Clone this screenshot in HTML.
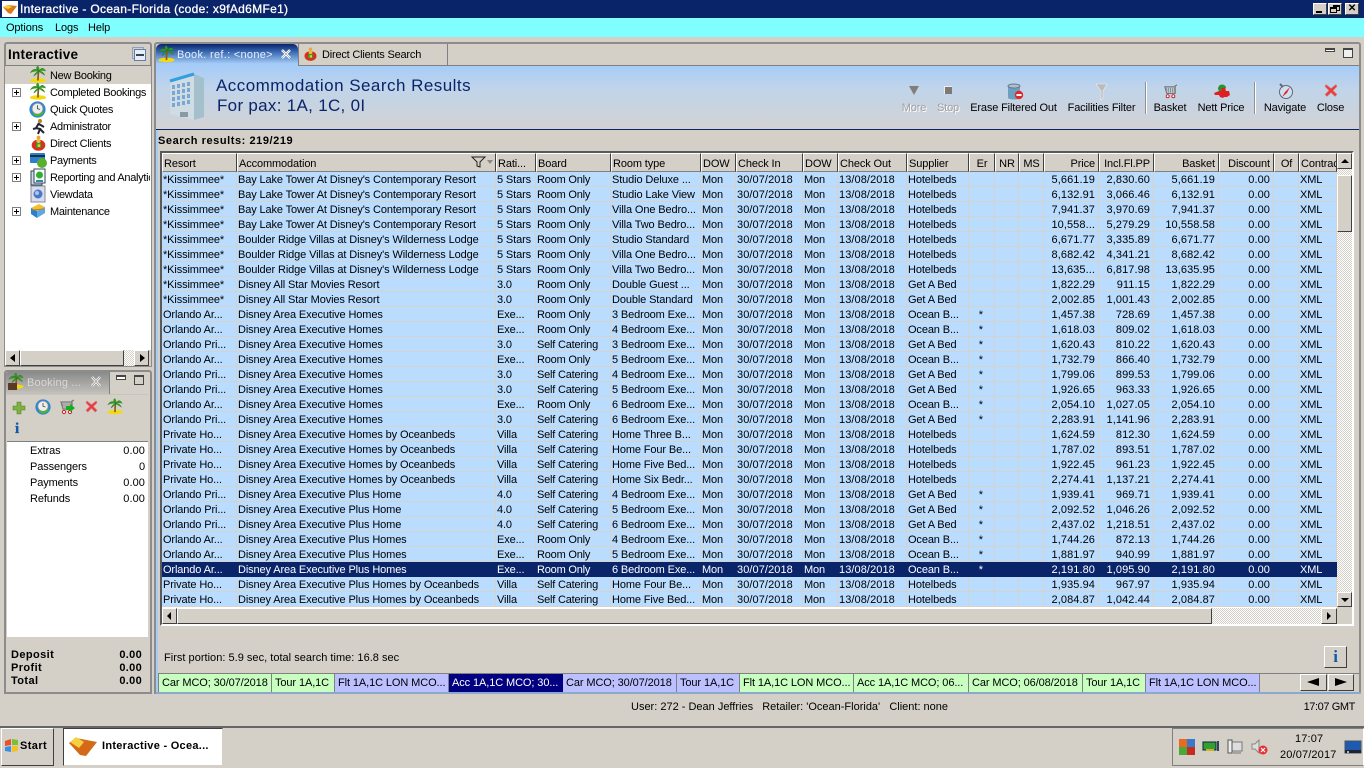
<!DOCTYPE html>
<html><head><meta charset="utf-8"><title>Interactive</title>
<style>
html,body{margin:0;padding:0;width:1364px;height:768px;overflow:hidden;background:#d4d0c8}
body{font:11px/13px "Liberation Sans",sans-serif;color:#000;position:relative;letter-spacing:-.12px}
.a{position:absolute;white-space:nowrap;margin-top:1px}
.t{letter-spacing:-.3px}
.b{position:absolute;box-sizing:border-box}
.raised{background:#d4d0c8;border:1px solid;border-color:#fff #404040 #404040 #fff;box-sizing:border-box;position:absolute}
.panel{position:absolute;box-sizing:border-box;border:2px solid #8c8c8c;border-radius:3px 3px 0 0}
table{border-collapse:separate;border-spacing:0;table-layout:fixed;position:absolute;left:162px;top:172px;width:1174px}
td{height:15px;box-sizing:border-box;padding:2px 0 0 1px;overflow:hidden;white-space:nowrap;background:#b9dcff;border-right:1px solid #d6d2cc;border-bottom:1px solid #d6d2cc;line-height:12px}
td:nth-child(n+14):nth-child(-n+17){text-align:right;padding:2px 3px 0 0;letter-spacing:.08px}
td:nth-child(7),td:nth-child(9){letter-spacing:.08px}
td:nth-child(4){letter-spacing:-.2px}
tr.s td{background:#0a246a;color:#fff;border-color:#0a246a}
tr.s td:nth-child(n){border-right-color:#0a246a}
.h{position:absolute;top:153px;height:19px;box-sizing:border-box;background:#d4d0c8;border:1px solid;border-color:#fff #404040 #808080 #fff;padding:3px 0 0 1px;line-height:15px;overflow:hidden;white-space:nowrap}
.r{text-align:right;padding-right:3px}
.tb{position:absolute;text-align:center;white-space:nowrap;top:102px;line-height:13px;letter-spacing:-.15px}
.bt{position:absolute;top:673px;height:19px;box-sizing:border-box;line-height:18px;padding-left:3px;white-space:nowrap;border-right:1px solid #808080;border-top:1px solid #808080;overflow:hidden;letter-spacing:-.1px}
.g{background:#c8ffc0}.l{background:#bcc0ff}
.w{position:absolute;background:#fff}
svg{position:absolute;overflow:visible}
.exp{position:absolute;left:12px;width:9px;height:9px;box-sizing:border-box;border:1px solid #808080;background:#fff}
.exp:before{content:"";position:absolute;left:1px;top:3px;width:5px;height:1px;background:#000}
.exp:after{content:"";position:absolute;left:3px;top:1px;width:1px;height:5px;background:#000}
</style></head><body>
<svg width="0" height="0" style="position:absolute"><defs>
<symbol id="palm" viewBox="0 0 20 20"><ellipse cx="10" cy="17" rx="9.500" ry="2.600" fill="#f5d90a"/><path d="M10 17 C10 13 10 9 11 6" stroke="#8a5a1a" stroke-width="2" fill="none"/><path d="M11 6 C7 2 3 4 1 8 C4 6 7 6 11 6 M11 6 C8 5 7 1 10 0 C11 2 12 4 11 6 M11 6 C14 1 17 2 19 6 C16 5 14 5 11 6 M11 6 C15 6 17 8 18 11 C15 9 13 8 11 6 M11 6 C8 7 6 9 5 12 C8 10 10 8 11 6" fill="#2f9e1f" stroke="#1c6e12" stroke-width=".4"/></symbol>
<symbol id="clock" viewBox="0 0 20 20"><circle cx="10" cy="10" r="9.500" fill="#2a86d8"/><circle cx="10" cy="9" r="6.500" fill="#eee" stroke="#888"/><path d="M10 5V9L13 10" stroke="#444" fill="none"/><path d="M4 15C8 20 14 19 18 13L16 12C13 16 9 17 6 14Z" fill="#46b82a"/></symbol>
<symbol id="man" viewBox="0 0 20 20"><circle cx="10" cy="3" r="2.300" fill="#e8a832"/><ellipse cx="10" cy="12" rx="8" ry="6.500" fill="#d8301c"/><rect x="7" y="9" width="6" height="6" fill="#2ea02e"/><rect x="9" y="11" width="3" height="3" fill="#f0d020"/><circle cx="10" cy="7" r="2.500" fill="#f0b848"/></symbol>
<symbol id="x" viewBox="0 0 14 14"><path d="M2 1L7 5L12 1L13 3L9 7L13 11L11 13L7 9L3 13L1 11L5 7L1 3Z" fill="#ee3a3a" stroke="#c88" stroke-width=".6"/></symbol>
<symbol id="cart" viewBox="0 0 16 16"><path d="M15 1L13 2V10H4L2 3H13" fill="none" stroke="#777" stroke-width="1.200"/><path d="M4 4V9M6 4V9M8 4V9M10 4V9M12 4V9" stroke="#888"/><circle cx="5" cy="13" r="1.600" fill="#fff" stroke="#c22"/><circle cx="11" cy="13" r="1.600" fill="#fff" stroke="#c22"/></symbol>
</defs></svg>

<!-- title bar -->
<div class="b" style="left:0;top:0;width:1364px;height:18px;background:#0a246a"></div>
<svg style="left:2px;top:1px" width="16" height="16" viewBox="0 0 16 16"><rect width="16" height="16" fill="#fff"/><path d="M1 6L6 4L15 5L9 13L6 12Z" fill="#d87a18"/><path d="M1 6L6 4L10 6L6 8Z" fill="#f5cd3c"/></svg>
<div class="a" style="left:20px;top:2px;margin:0;color:#fff;font-size:12px;letter-spacing:.31px;line-height:14px;-webkit-text-stroke:.3px #fff">Interactive - Ocean-Florida (code: x9fAd6MFe1)</div>
<div class="raised" style="left:1313px;top:3px;width:14px;height:12px"><div class="b" style="left:2px;top:7px;width:6px;height:2px;background:#000"></div></div>
<div class="raised" style="left:1328px;top:3px;width:14px;height:12px"><div class="b" style="left:4px;top:1px;width:7px;height:6px;border:1px solid #000;border-top-width:2px"></div><div class="b" style="left:1px;top:3px;width:7px;height:6px;border:1px solid #000;border-top-width:2px;background:#d4d0c8"></div></div>
<div class="raised" style="left:1345px;top:3px;width:14px;height:12px;font:bold 10px/9px 'Liberation Sans';text-align:center">✕</div>

<!-- menu -->
<div class="b" style="left:0;top:18px;width:1364px;height:19px;background:#7fffff"></div>
<div class="a" style="left:6px;top:21px">Options</div>
<div class="a" style="left:55px;top:21px">Logs</div>
<div class="a" style="left:88px;top:21px">Help</div>

<!-- left tree panel -->
<div class="panel" style="left:4px;top:42px;width:148px;height:325px"></div>
<div class="a" style="left:8px;top:46px;font-size:13.5px;line-height:16px;font-weight:bold;letter-spacing:.25px">Interactive</div>
<div class="b" style="left:132px;top:47px;width:12px;height:12px;border:1px solid #8ca0c0"></div>
<div class="b" style="left:134px;top:49px;width:12px;height:12px;border:1px solid #6080a8;background:#e8eef8"></div>
<div class="b" style="left:136px;top:54px;width:8px;height:2px;background:#345"></div>
<div class="b" style="left:5px;top:65px;width:146px;height:1px;background:#808080"></div>
<div class="w" style="left:5px;top:66px;width:146px;height:284px"></div>
<div class="b" style="left:5px;top:66px;width:146px;height:18px;background:#d4d0c8"></div>
<svg style="left:29px;top:66px" width="18" height="17"><use href="#palm" width="18" height="17"/></svg>
<div class="a t" style="left:50px;top:69px">New Booking</div>
<div class="exp" style="top:88px"></div>
<svg style="left:29px;top:83px" width="18" height="17"><use href="#palm" width="18" height="17"/></svg>
<div class="a t" style="left:50px;top:86px">Completed Bookings</div>
<svg style="left:29px;top:101px" width="17" height="17"><use href="#clock" width="17" height="17"/></svg>
<div class="a t" style="left:50px;top:103px">Quick Quotes</div>
<div class="exp" style="top:122px"></div>
<svg style="left:32px;top:119px" width="14" height="16" viewBox="0 0 14 16"><circle cx="8" cy="2" r="2" fill="#c08020"/><path d="M7 4L4 9L8 10L6 15M7 5L12 8M5 9L1 10M8 10L12 14" stroke="#223" stroke-width="2" fill="none"/></svg>
<div class="a t" style="left:50px;top:120px">Administrator</div>
<svg style="left:30px;top:135px" width="17" height="17"><use href="#man" width="17" height="17"/></svg>
<div class="a t" style="left:50px;top:137px">Direct Clients</div>
<div class="exp" style="top:156px"></div>
<svg style="left:30px;top:153px" width="17" height="16" viewBox="0 0 17 16"><rect y="0" width="15" height="10" rx="1" fill="#2a7fd0"/><rect y="2" width="15" height="2" fill="#134"/><circle cx="12" cy="10" r="5" fill="#58b030"/></svg>
<div class="a t" style="left:50px;top:154px">Payments</div>
<div class="exp" style="top:173px"></div>
<svg style="left:31px;top:169px" width="15" height="17" viewBox="0 0 15 17"><rect x="0" y="2" width="11" height="14" fill="#cde" stroke="#345"/><rect x="3" y="0" width="11" height="14" fill="#fff" stroke="#345"/><circle cx="8.500" cy="6" r="3.500" fill="#30b030"/><rect x="5" y="11" width="7" height="2" fill="#38a"/></svg>
<div class="a t" style="left:50px;top:171px;width:100px;overflow:hidden">Reporting and Analytics</div>
<svg style="left:31px;top:186px" width="14" height="16" viewBox="0 0 14 16"><rect width="14" height="16" fill="#d8dcec" stroke="#889"/><circle cx="7" cy="8" r="4.500" fill="#4a78c8"/><circle cx="6" cy="7" r="2" fill="#a8c8f0"/></svg>
<div class="a t" style="left:50px;top:188px">Viewdata</div>
<div class="exp" style="top:207px"></div>
<svg style="left:30px;top:203px" width="16" height="16" viewBox="0 0 16 16"><path d="M1 5L9 1L15 4L7 8Z" fill="#f0c030"/><path d="M1 5L7 8V15L1 11Z" fill="#2a80d0"/><path d="M7 8L15 4V10L7 15Z" fill="#60a8e0"/><path d="M2 7L14 6" stroke="#c08018"/></svg>
<div class="a t" style="left:50px;top:205px">Maintenance</div>
<!-- tree hscroll -->
<div class="b" style="left:5px;top:350px;width:146px;height:16px;background:#d4d0c8"></div>
<div class="raised" style="left:5px;top:350px;width:15px;height:16px"><div class="b" style="left:4px;top:3px;border:4px solid transparent;border-right:5px solid #000;border-left:0"></div></div>
<div class="raised" style="left:20px;top:350px;width:104px;height:16px"></div>
<div class="b" style="left:124px;top:350px;width:10px;height:16px;background:repeating-conic-gradient(#fff 0 25%,#d4d0c8 0 50%) 0 0/2px 2px"></div>
<div class="raised" style="left:134px;top:350px;width:15px;height:16px"><div class="b" style="left:5px;top:3px;border:4px solid transparent;border-left:5px solid #000;border-right:0"></div></div>

<!-- booking panel -->
<div class="panel" style="left:4px;top:370px;width:148px;height:324px"></div>
<div class="b" style="left:6px;top:372px;width:103px;height:22px;background:linear-gradient(#8a8a8a,#c4c2bc);border-radius:2px 0 0 0"></div>
<div class="b" style="left:109px;top:372px;width:1px;height:22px;background:#808080"></div>
<svg style="left:8px;top:373px" width="16" height="17"><use href="#palm" width="16" height="16"/></svg>
<div class="b" style="left:8px;top:383px;width:9px;height:7px;background:#5a3a22"></div>
<div class="a" style="left:27px;top:376px;color:#d8d8d8;letter-spacing:.2px">Booking ...</div>
<svg style="left:91px;top:376px" width="10" height="11" viewBox="0 0 10 11"><path d="M1 1L9 10M9 1L1 10" stroke="#fff" stroke-width="2.400"/><path d="M1 1L9 10M9 1L1 10" stroke="#777" stroke-width=".6"/></svg>
<div class="b" style="left:116px;top:375px;width:10px;height:5px;border:1px solid #444;border-top-width:2px;background:#fff"></div>
<div class="b" style="left:134px;top:375px;width:10px;height:10px;border:1px solid #444;border-top-width:2px"></div>
<div class="b" style="left:7px;top:394px;width:141px;height:1px;background:#c8c4bc"></div>
<svg style="left:12px;top:401px" width="14" height="14" viewBox="0 0 14 14"><path d="M5 1H9V5H13V9H9V13H5V9H1V5H5Z" fill="#80b040" stroke="#508030" stroke-width=".6"/></svg>
<svg style="left:35px;top:399px" width="16" height="16"><use href="#clock" width="16" height="16"/></svg>
<svg style="left:59px;top:399px" width="16" height="16"><use href="#cart" width="16" height="16"/></svg>
<svg style="left:66px;top:404px" width="9" height="8" viewBox="0 0 9 8"><path d="M0 2H4V0L9 4L4 8V6H0Z" fill="#10b020"/></svg>
<svg style="left:85px;top:400px" width="13" height="13"><use href="#x" width="13" height="13"/></svg>
<svg style="left:107px;top:398px" width="16" height="17"><use href="#palm" width="16" height="17"/></svg>
<div class="a" style="left:15px;top:420px;margin:0;font:bold 15px/18px 'Liberation Serif',serif;color:#1058a8;-webkit-text-stroke:.3px #1058a8">i</div>
<div class="b" style="left:7px;top:441px;width:141px;height:1px;background:#808080"></div>
<div class="w" style="left:7px;top:442px;width:141px;height:195px"></div>
<div class="a" style="left:30px;top:444px">Extras</div><div class="a" style="right:1219px;top:444px;letter-spacing:.08px">0.00</div>
<div class="a" style="left:30px;top:460px">Passengers</div><div class="a" style="right:1219px;top:460px">0</div>
<div class="a" style="left:30px;top:476px">Payments</div><div class="a" style="right:1219px;top:476px;letter-spacing:.08px">0.00</div>
<div class="a" style="left:30px;top:492px">Refunds</div><div class="a" style="right:1219px;top:492px;letter-spacing:.08px">0.00</div>
<div class="a" style="left:11px;top:648px;font-weight:bold;letter-spacing:.4px">Deposit</div><div class="a" style="right:1222px;top:648px;font-weight:bold;letter-spacing:.3px">0.00</div>
<div class="a" style="left:11px;top:661px;font-weight:bold;letter-spacing:.4px">Profit</div><div class="a" style="right:1222px;top:661px;font-weight:bold;letter-spacing:.3px">0.00</div>
<div class="a" style="left:11px;top:674px;font-weight:bold;letter-spacing:.4px">Total</div><div class="a" style="right:1222px;top:674px;font-weight:bold;letter-spacing:.3px">0.00</div>

<!-- main panel -->
<div class="panel" style="left:154px;top:42px;width:1207px;height:652px;border-color:#8c8c8c"></div>
<div class="b" style="left:156px;top:65px;width:1203px;height:627px;border-left:2px solid #a8ccf8"></div>
<div class="b" style="left:156px;top:692px;width:1205px;height:2px;background:#8ca8cc"></div>
<div class="b" style="left:156px;top:66px;width:1203px;height:63px;background:linear-gradient(#a6ccf8 0,#c0d4ea 35%,#d2d2d4 100%)"></div>
<div class="b" style="left:156px;top:65px;width:1203px;height:1px;background:#808080"></div>
<div class="b" style="left:156px;top:129px;width:1203px;height:1px;background:#0a246a"></div>
<!-- main tabs -->
<div class="b" style="left:156px;top:44px;width:142px;height:22px;background:linear-gradient(#0a246a 0,#3868b0 35%,#a6ccf8 90%);border-radius:5px 5px 0 0"></div>
<svg style="left:158px;top:45px" width="17" height="18"><use href="#palm" width="17" height="18"/></svg>
<div class="a" style="left:177px;top:48px;color:#e8f0ff;letter-spacing:.3px">Book. ref.: &lt;none&gt;</div>
<svg style="left:281px;top:49px" width="10" height="10" viewBox="0 0 10 10"><path d="M1 1L9 9M9 1L1 9" stroke="#fff" stroke-width="2.400"/><path d="M1 1L9 9M9 1L1 9" stroke="#666" stroke-width=".5"/></svg>
<div class="b" style="left:298px;top:44px;width:1px;height:22px;background:#808080"></div>
<svg style="left:303px;top:46px" width="15" height="17"><use href="#man" width="15" height="17"/></svg>
<div class="a" style="left:322px;top:48px;letter-spacing:-.2px">Direct Clients Search</div>
<div class="b" style="left:447px;top:44px;width:1px;height:21px;background:#808080"></div>
<div class="b" style="left:1325px;top:48px;width:10px;height:4px;border:1px solid #444;border-top-width:2px;background:#fff"></div>
<div class="b" style="left:1343px;top:48px;width:10px;height:10px;border:1px solid #444;border-top-width:2px;background:#f0f0f0"></div>

<!-- hotel icon -->
<svg style="left:169px;top:73px" width="36" height="48" viewBox="0 0 36 48"><path d="M1 8L25 1V47L1 41Z" fill="#d0dce4"/><path d="M25 1L35 5V44L25 47Z" fill="#a4c0cc"/><path d="M1 8L25 1" stroke="#30a0e0" stroke-width="3"/><g fill="#7aa8d4"><path d="M3 12h3v4h-3zM8 11h3v4h-3zM13 10h3v4h-3zM18 9h3v4h-3zM3 18h3v4h-3zM8 17h3v4h-3zM13 16h3v4h-3zM18 15h3v4h-3zM3 24h3v4h-3zM8 23h3v4h-3zM13 22h3v4h-3zM18 21h3v4h-3zM3 30h3v4h-3zM8 29h3v4h-3zM13 28h3v4h-3zM18 27h3v4h-3z"/></g><rect x="11" y="39" width="8" height="5" fill="#8a9aa4"/></svg>
<div class="a" style="left:216px;top:76px;margin:0;font-size:17px;line-height:19px;color:#0a246a;letter-spacing:.47px">Accommodation Search Results</div>
<div class="a" style="left:217px;top:96px;margin:0;font-size:17px;line-height:19px;color:#0a246a;letter-spacing:.3px">For pax: 1A, 1C, 0I</div>

<!-- toolbar -->
<svg style="left:908px;top:85px" width="12" height="11" viewBox="0 0 12 11"><path d="M1 1H11L6 10Z" fill="#807e78"/></svg>
<div class="b" style="left:944px;top:86px;width:8px;height:8px;background:#7c7a76;border-left:1px solid #eee;border-top:1px solid #eee"></div>
<div class="tb" style="left:895px;width:38px;color:#a0a0a0;text-shadow:1px 1px 0 #fff">More</div>
<div class="tb" style="left:930px;width:36px;color:#a0a0a0;text-shadow:1px 1px 0 #fff">Stop</div>
<svg style="left:1007px;top:83px" width="17" height="17" viewBox="0 0 17 17"><path d="M1 3V15C3 17 11 17 13 15V3Z" fill="#6ba0c0"/><ellipse cx="7" cy="3" rx="6" ry="2" fill="#a8c0d0" stroke="#678"/><circle cx="12" cy="12" r="4.200" fill="#e02828"/><rect x="9.500" y="11" width="5" height="2" fill="#fff"/></svg>
<div class="tb" style="left:965px;width:97px">Erase Filtered Out</div>
<svg style="left:1095px;top:83px" width="13" height="17" viewBox="0 0 13 17"><path d="M1 1H12L8 8V15L6 17V8Z" fill="#bbb" stroke="#eee" stroke-width=".6"/></svg>
<div class="tb" style="left:1063px;width:77px">Facilities Filter</div>
<div class="b" style="left:1145px;top:82px;width:2px;height:32px;background:linear-gradient(90deg,#909090 50%,#fff 50%)"></div>
<svg style="left:1163px;top:83px" width="15" height="17"><use href="#cart" width="15" height="17"/></svg>
<div class="tb" style="left:1150px;width:40px">Basket</div>
<svg style="left:1214px;top:83px" width="16" height="16" viewBox="0 0 16 16"><path d="M4 6C4 1 10 0 12 4L11 8H5Z" fill="#2f9030"/><path d="M0 10L5 8H8L7 5L11 5L12 8L15 8L16 12L13 14H10L9 15L6 14L5 12H1Z" fill="#e02020"/></svg>
<div class="tb" style="left:1192px;width:58px">Nett Price</div>
<div class="b" style="left:1254px;top:82px;width:2px;height:32px;background:linear-gradient(90deg,#909090 50%,#fff 50%)"></div>
<svg style="left:1278px;top:83px" width="16" height="17" viewBox="0 0 16 17"><circle cx="8" cy="9" r="6.500" fill="#cfe0f0" stroke="#667"/><path d="M12 4L7 9L4 14L9 10Z" fill="#e02828"/><path d="M2 1L5 4" stroke="#667" stroke-width="2"/></svg>
<div class="tb" style="left:1258px;width:54px">Navigate</div>
<svg style="left:1324px;top:83px" width="14" height="15"><use href="#x" width="14" height="15"/></svg>
<div class="tb" style="left:1314px;width:33px">Close</div>

<div class="a" style="left:158px;top:134px;font-weight:bold;letter-spacing:.56px">Search results: 219/219</div>

<!-- grid frame -->
<div class="b" style="left:160px;top:151px;width:1194px;height:475px;border:2px solid;border-color:#5a5a5a #fff #fff #5a5a5a;background:#d4d0c8"></div>

<!-- header -->
<div class="h" style="left:162px;width:75px">Resort</div>
<div class="h" style="left:237px;width:259px">Accommodation<svg style="left:233px;top:2px" width="22" height="12" viewBox="0 0 22 12"><path d="M1 1H14L9 6V11L6 10V6Z" fill="none" stroke="#222"/><path d="M16 4H22L19 8Z" fill="#888"/></svg></div>
<div class="h" style="left:496px;width:40px">Rati...</div>
<div class="h" style="left:536px;width:75px">Board</div>
<div class="h" style="left:611px;width:90px">Room type</div>
<div class="h" style="left:701px;width:35px">DOW</div>
<div class="h" style="left:736px;width:67px">Check In</div>
<div class="h" style="left:803px;width:35px">DOW</div>
<div class="h" style="left:838px;width:69px">Check Out</div>
<div class="h" style="left:907px;width:62px">Supplier</div>
<div class="h" style="left:969px;width:26px;text-align:center;padding-left:0">Er</div>
<div class="h" style="left:995px;width:24px;text-align:center;padding-left:0">NR</div>
<div class="h" style="left:1019px;width:25px;text-align:center;padding-left:0">MS</div>
<div class="h r" style="left:1044px;width:55px">Price</div>
<div class="h r" style="left:1099px;width:55px">Incl.Fl.PP</div>
<div class="h r" style="left:1154px;width:65px">Basket</div>
<div class="h r" style="left:1219px;width:55px">Discount</div>
<div class="h" style="left:1274px;width:25px;text-align:center;padding-left:0">Of</div>
<div class="h" style="left:1299px;width:38px">Contract</div>

<table><colgroup><col style="width:75px"><col style="width:259px"><col style="width:40px"><col style="width:75px"><col style="width:90px"><col style="width:35px"><col style="width:67px"><col style="width:35px"><col style="width:69px"><col style="width:62px"><col style="width:26px"><col style="width:24px"><col style="width:25px"><col style="width:55px"><col style="width:55px"><col style="width:65px"><col style="width:55px"><col style="width:25px"><col style="width:38px"></colgroup>
<tr><td>*Kissimmee*</td><td>Bay Lake Tower At Disney's Contemporary Resort</td><td>5 Stars</td><td>Room Only</td><td>Studio Deluxe ...</td><td>Mon</td><td>30/07/2018</td><td>Mon</td><td>13/08/2018</td><td>Hotelbeds</td><td></td><td></td><td></td><td>5,661.19</td><td>2,830.60</td><td>5,661.19</td><td>0.00</td><td></td><td>XML</td></tr>
<tr><td>*Kissimmee*</td><td>Bay Lake Tower At Disney's Contemporary Resort</td><td>5 Stars</td><td>Room Only</td><td>Studio Lake View</td><td>Mon</td><td>30/07/2018</td><td>Mon</td><td>13/08/2018</td><td>Hotelbeds</td><td></td><td></td><td></td><td>6,132.91</td><td>3,066.46</td><td>6,132.91</td><td>0.00</td><td></td><td>XML</td></tr>
<tr><td>*Kissimmee*</td><td>Bay Lake Tower At Disney's Contemporary Resort</td><td>5 Stars</td><td>Room Only</td><td>Villa One Bedro...</td><td>Mon</td><td>30/07/2018</td><td>Mon</td><td>13/08/2018</td><td>Hotelbeds</td><td></td><td></td><td></td><td>7,941.37</td><td>3,970.69</td><td>7,941.37</td><td>0.00</td><td></td><td>XML</td></tr>
<tr><td>*Kissimmee*</td><td>Bay Lake Tower At Disney's Contemporary Resort</td><td>5 Stars</td><td>Room Only</td><td>Villa Two Bedro...</td><td>Mon</td><td>30/07/2018</td><td>Mon</td><td>13/08/2018</td><td>Hotelbeds</td><td></td><td></td><td></td><td>10,558...</td><td>5,279.29</td><td>10,558.58</td><td>0.00</td><td></td><td>XML</td></tr>
<tr><td>*Kissimmee*</td><td>Boulder Ridge Villas at Disney's Wilderness Lodge</td><td>5 Stars</td><td>Room Only</td><td>Studio Standard</td><td>Mon</td><td>30/07/2018</td><td>Mon</td><td>13/08/2018</td><td>Hotelbeds</td><td></td><td></td><td></td><td>6,671.77</td><td>3,335.89</td><td>6,671.77</td><td>0.00</td><td></td><td>XML</td></tr>
<tr><td>*Kissimmee*</td><td>Boulder Ridge Villas at Disney's Wilderness Lodge</td><td>5 Stars</td><td>Room Only</td><td>Villa One Bedro...</td><td>Mon</td><td>30/07/2018</td><td>Mon</td><td>13/08/2018</td><td>Hotelbeds</td><td></td><td></td><td></td><td>8,682.42</td><td>4,341.21</td><td>8,682.42</td><td>0.00</td><td></td><td>XML</td></tr>
<tr><td>*Kissimmee*</td><td>Boulder Ridge Villas at Disney's Wilderness Lodge</td><td>5 Stars</td><td>Room Only</td><td>Villa Two Bedro...</td><td>Mon</td><td>30/07/2018</td><td>Mon</td><td>13/08/2018</td><td>Hotelbeds</td><td></td><td></td><td></td><td>13,635...</td><td>6,817.98</td><td>13,635.95</td><td>0.00</td><td></td><td>XML</td></tr>
<tr><td>*Kissimmee*</td><td>Disney All Star Movies Resort</td><td>3.0</td><td>Room Only</td><td>Double Guest ...</td><td>Mon</td><td>30/07/2018</td><td>Mon</td><td>13/08/2018</td><td>Get A Bed</td><td></td><td></td><td></td><td>1,822.29</td><td>911.15</td><td>1,822.29</td><td>0.00</td><td></td><td>XML</td></tr>
<tr><td>*Kissimmee*</td><td>Disney All Star Movies Resort</td><td>3.0</td><td>Room Only</td><td>Double Standard</td><td>Mon</td><td>30/07/2018</td><td>Mon</td><td>13/08/2018</td><td>Get A Bed</td><td></td><td></td><td></td><td>2,002.85</td><td>1,001.43</td><td>2,002.85</td><td>0.00</td><td></td><td>XML</td></tr>
<tr><td>Orlando Ar...</td><td>Disney Area Executive Homes</td><td>Exe...</td><td>Room Only</td><td>3 Bedroom Exe...</td><td>Mon</td><td>30/07/2018</td><td>Mon</td><td>13/08/2018</td><td>Ocean B...</td><td>&nbsp;&nbsp;&nbsp;*</td><td></td><td></td><td>1,457.38</td><td>728.69</td><td>1,457.38</td><td>0.00</td><td></td><td>XML</td></tr>
<tr><td>Orlando Ar...</td><td>Disney Area Executive Homes</td><td>Exe...</td><td>Room Only</td><td>4 Bedroom Exe...</td><td>Mon</td><td>30/07/2018</td><td>Mon</td><td>13/08/2018</td><td>Ocean B...</td><td>&nbsp;&nbsp;&nbsp;*</td><td></td><td></td><td>1,618.03</td><td>809.02</td><td>1,618.03</td><td>0.00</td><td></td><td>XML</td></tr>
<tr><td>Orlando Pri...</td><td>Disney Area Executive Homes</td><td>3.0</td><td>Self Catering</td><td>3 Bedroom Exe...</td><td>Mon</td><td>30/07/2018</td><td>Mon</td><td>13/08/2018</td><td>Get A Bed</td><td>&nbsp;&nbsp;&nbsp;*</td><td></td><td></td><td>1,620.43</td><td>810.22</td><td>1,620.43</td><td>0.00</td><td></td><td>XML</td></tr>
<tr><td>Orlando Ar...</td><td>Disney Area Executive Homes</td><td>Exe...</td><td>Room Only</td><td>5 Bedroom Exe...</td><td>Mon</td><td>30/07/2018</td><td>Mon</td><td>13/08/2018</td><td>Ocean B...</td><td>&nbsp;&nbsp;&nbsp;*</td><td></td><td></td><td>1,732.79</td><td>866.40</td><td>1,732.79</td><td>0.00</td><td></td><td>XML</td></tr>
<tr><td>Orlando Pri...</td><td>Disney Area Executive Homes</td><td>3.0</td><td>Self Catering</td><td>4 Bedroom Exe...</td><td>Mon</td><td>30/07/2018</td><td>Mon</td><td>13/08/2018</td><td>Get A Bed</td><td>&nbsp;&nbsp;&nbsp;*</td><td></td><td></td><td>1,799.06</td><td>899.53</td><td>1,799.06</td><td>0.00</td><td></td><td>XML</td></tr>
<tr><td>Orlando Pri...</td><td>Disney Area Executive Homes</td><td>3.0</td><td>Self Catering</td><td>5 Bedroom Exe...</td><td>Mon</td><td>30/07/2018</td><td>Mon</td><td>13/08/2018</td><td>Get A Bed</td><td>&nbsp;&nbsp;&nbsp;*</td><td></td><td></td><td>1,926.65</td><td>963.33</td><td>1,926.65</td><td>0.00</td><td></td><td>XML</td></tr>
<tr><td>Orlando Ar...</td><td>Disney Area Executive Homes</td><td>Exe...</td><td>Room Only</td><td>6 Bedroom Exe...</td><td>Mon</td><td>30/07/2018</td><td>Mon</td><td>13/08/2018</td><td>Ocean B...</td><td>&nbsp;&nbsp;&nbsp;*</td><td></td><td></td><td>2,054.10</td><td>1,027.05</td><td>2,054.10</td><td>0.00</td><td></td><td>XML</td></tr>
<tr><td>Orlando Pri...</td><td>Disney Area Executive Homes</td><td>3.0</td><td>Self Catering</td><td>6 Bedroom Exe...</td><td>Mon</td><td>30/07/2018</td><td>Mon</td><td>13/08/2018</td><td>Get A Bed</td><td>&nbsp;&nbsp;&nbsp;*</td><td></td><td></td><td>2,283.91</td><td>1,141.96</td><td>2,283.91</td><td>0.00</td><td></td><td>XML</td></tr>
<tr><td>Private Ho...</td><td>Disney Area Executive Homes by Oceanbeds</td><td>Villa</td><td>Self Catering</td><td>Home Three B...</td><td>Mon</td><td>30/07/2018</td><td>Mon</td><td>13/08/2018</td><td>Hotelbeds</td><td></td><td></td><td></td><td>1,624.59</td><td>812.30</td><td>1,624.59</td><td>0.00</td><td></td><td>XML</td></tr>
<tr><td>Private Ho...</td><td>Disney Area Executive Homes by Oceanbeds</td><td>Villa</td><td>Self Catering</td><td>Home Four Be...</td><td>Mon</td><td>30/07/2018</td><td>Mon</td><td>13/08/2018</td><td>Hotelbeds</td><td></td><td></td><td></td><td>1,787.02</td><td>893.51</td><td>1,787.02</td><td>0.00</td><td></td><td>XML</td></tr>
<tr><td>Private Ho...</td><td>Disney Area Executive Homes by Oceanbeds</td><td>Villa</td><td>Self Catering</td><td>Home Five Bed...</td><td>Mon</td><td>30/07/2018</td><td>Mon</td><td>13/08/2018</td><td>Hotelbeds</td><td></td><td></td><td></td><td>1,922.45</td><td>961.23</td><td>1,922.45</td><td>0.00</td><td></td><td>XML</td></tr>
<tr><td>Private Ho...</td><td>Disney Area Executive Homes by Oceanbeds</td><td>Villa</td><td>Self Catering</td><td>Home Six Bedr...</td><td>Mon</td><td>30/07/2018</td><td>Mon</td><td>13/08/2018</td><td>Hotelbeds</td><td></td><td></td><td></td><td>2,274.41</td><td>1,137.21</td><td>2,274.41</td><td>0.00</td><td></td><td>XML</td></tr>
<tr><td>Orlando Pri...</td><td>Disney Area Executive Plus Home</td><td>4.0</td><td>Self Catering</td><td>4 Bedroom Exe...</td><td>Mon</td><td>30/07/2018</td><td>Mon</td><td>13/08/2018</td><td>Get A Bed</td><td>&nbsp;&nbsp;&nbsp;*</td><td></td><td></td><td>1,939.41</td><td>969.71</td><td>1,939.41</td><td>0.00</td><td></td><td>XML</td></tr>
<tr><td>Orlando Pri...</td><td>Disney Area Executive Plus Home</td><td>4.0</td><td>Self Catering</td><td>5 Bedroom Exe...</td><td>Mon</td><td>30/07/2018</td><td>Mon</td><td>13/08/2018</td><td>Get A Bed</td><td>&nbsp;&nbsp;&nbsp;*</td><td></td><td></td><td>2,092.52</td><td>1,046.26</td><td>2,092.52</td><td>0.00</td><td></td><td>XML</td></tr>
<tr><td>Orlando Pri...</td><td>Disney Area Executive Plus Home</td><td>4.0</td><td>Self Catering</td><td>6 Bedroom Exe...</td><td>Mon</td><td>30/07/2018</td><td>Mon</td><td>13/08/2018</td><td>Get A Bed</td><td>&nbsp;&nbsp;&nbsp;*</td><td></td><td></td><td>2,437.02</td><td>1,218.51</td><td>2,437.02</td><td>0.00</td><td></td><td>XML</td></tr>
<tr><td>Orlando Ar...</td><td>Disney Area Executive Plus Homes</td><td>Exe...</td><td>Room Only</td><td>4 Bedroom Exe...</td><td>Mon</td><td>30/07/2018</td><td>Mon</td><td>13/08/2018</td><td>Ocean B...</td><td>&nbsp;&nbsp;&nbsp;*</td><td></td><td></td><td>1,744.26</td><td>872.13</td><td>1,744.26</td><td>0.00</td><td></td><td>XML</td></tr>
<tr><td>Orlando Ar...</td><td>Disney Area Executive Plus Homes</td><td>Exe...</td><td>Room Only</td><td>5 Bedroom Exe...</td><td>Mon</td><td>30/07/2018</td><td>Mon</td><td>13/08/2018</td><td>Ocean B...</td><td>&nbsp;&nbsp;&nbsp;*</td><td></td><td></td><td>1,881.97</td><td>940.99</td><td>1,881.97</td><td>0.00</td><td></td><td>XML</td></tr>
<tr class="s"><td>Orlando Ar...</td><td>Disney Area Executive Plus Homes</td><td>Exe...</td><td>Room Only</td><td>6 Bedroom Exe...</td><td>Mon</td><td>30/07/2018</td><td>Mon</td><td>13/08/2018</td><td>Ocean B...</td><td>&nbsp;&nbsp;&nbsp;*</td><td></td><td></td><td>2,191.80</td><td>1,095.90</td><td>2,191.80</td><td>0.00</td><td></td><td>XML</td></tr>
<tr><td>Private Ho...</td><td>Disney Area Executive Plus Homes by Oceanbeds</td><td>Villa</td><td>Self Catering</td><td>Home Four Be...</td><td>Mon</td><td>30/07/2018</td><td>Mon</td><td>13/08/2018</td><td>Hotelbeds</td><td></td><td></td><td></td><td>1,935.94</td><td>967.97</td><td>1,935.94</td><td>0.00</td><td></td><td>XML</td></tr>
<tr><td>Private Ho...</td><td>Disney Area Executive Plus Homes by Oceanbeds</td><td>Villa</td><td>Self Catering</td><td>Home Five Bed...</td><td>Mon</td><td>30/07/2018</td><td>Mon</td><td>13/08/2018</td><td>Hotelbeds</td><td></td><td></td><td></td><td>2,084.87</td><td>1,042.44</td><td>2,084.87</td><td>0.00</td><td></td><td>XML</td></tr>
</table>

<!-- vscroll -->
<div class="b" style="left:1337px;top:153px;width:15px;height:454px;background:repeating-conic-gradient(#fff 0 25%,#d4d0c8 0 50%) 0 0/2px 2px"></div>
<div class="raised" style="left:1337px;top:153px;width:15px;height:16px"><div class="b" style="left:3px;top:5px;border:4px solid transparent;border-bottom:4px solid #000;border-top:0"></div></div>
<div class="raised" style="left:1337px;top:175px;width:15px;height:57px"></div>
<div class="raised" style="left:1337px;top:592px;width:15px;height:15px"><div class="b" style="left:3px;top:5px;border:4px solid transparent;border-top:4px solid #000;border-bottom:0"></div></div>
<!-- hscroll -->
<div class="b" style="left:162px;top:607px;width:1175px;height:1px;background:#fff"></div>
<div class="b" style="left:162px;top:608px;width:1175px;height:16px;background:repeating-conic-gradient(#fff 0 25%,#d4d0c8 0 50%) 0 0/2px 2px"></div>
<div class="raised" style="left:162px;top:608px;width:15px;height:16px"><div class="b" style="left:4px;top:3px;border:4px solid transparent;border-right:4px solid #000;border-left:0"></div></div>
<div class="raised" style="left:177px;top:608px;width:1035px;height:16px"></div>
<div class="raised" style="left:1321px;top:608px;width:16px;height:16px"><div class="b" style="left:5px;top:3px;border:4px solid transparent;border-left:4px solid #000;border-right:0"></div></div>

<div class="a" style="left:164px;top:651px;letter-spacing:.02px">First portion: 5.9 sec, total search time: 16.8 sec</div>
<div class="raised" style="left:1324px;top:646px;width:23px;height:22px;text-align:center;font:bold 17px/19px 'Liberation Serif',serif;color:#1058a8">i</div>

<!-- bottom tabs -->
<div class="b" style="left:158px;top:673px;width:1px;height:19px;background:#808080"></div>
<div class="bt g" style="left:159px;width:113px">Car MCO; 30/07/2018</div>
<div class="bt g" style="left:272px;width:63px">Tour 1A,1C</div>
<div class="bt l" style="left:335px;width:114px">Flt 1A,1C LON MCO...</div>
<div class="bt" style="left:449px;width:114px;background:#000080;color:#fff;border-right:0">Acc 1A,1C MCO; 30...</div>
<div class="bt l" style="left:563px;width:114px">Car MCO; 30/07/2018</div>
<div class="bt l" style="left:677px;width:63px">Tour 1A,1C</div>
<div class="bt g" style="left:740px;width:114px">Flt 1A,1C LON MCO...</div>
<div class="bt g" style="left:854px;width:115px">Acc 1A,1C MCO; 06...</div>
<div class="bt g" style="left:969px;width:114px">Car MCO; 06/08/2018</div>
<div class="bt g" style="left:1083px;width:63px">Tour 1A,1C</div>
<div class="bt l" style="left:1146px;width:114px">Flt 1A,1C LON MCO...</div>
<div class="b" style="left:1260px;top:673px;width:99px;height:1px;background:#808080"></div>
<div class="raised" style="left:1300px;top:674px;width:27px;height:17px"><div class="b" style="left:6px;top:3px;border:4px solid transparent;border-right:12px solid #000;border-left:0"></div></div>
<div class="raised" style="left:1328px;top:674px;width:26px;height:17px"><div class="b" style="left:6px;top:3px;border:4px solid transparent;border-left:12px solid #000;border-right:0"></div></div>

<!-- status -->
<div class="a" style="left:631px;top:700px;letter-spacing:0">User: 272 - Dean Jeffries &nbsp; Retailer: 'Ocean-Florida' &nbsp; Client: none</div>
<div class="a" style="right:9px;top:700px;letter-spacing:-.4px">17:07 GMT</div>

<!-- taskbar -->
<div class="b" style="left:0;top:726px;width:1364px;height:2px;background:#666"></div>
<div class="raised" style="left:1px;top:728px;width:53px;height:38px;border-right-color:#404040;border-bottom-color:#404040"></div>
<svg style="left:4px;top:738px" width="15" height="15" viewBox="0 0 15 15"><path d="M1 3L7 1V7L1 8Z" fill="#e8502a"/><path d="M8 1L14 2V7L8 7Z" fill="#80c030"/><path d="M1 9L7 8V14L1 13Z" fill="#3a90e0"/><path d="M8 8L14 8V13L8 14Z" fill="#f5c020"/></svg>
<div class="a" style="left:20px;top:739px;font-weight:bold;letter-spacing:.4px">Start</div>
<div class="b" style="left:63px;top:728px;width:160px;height:38px;background:#fff;border:1px solid;border-color:#404040 #d4d0c8 #d4d0c8 #404040"></div>
<svg style="left:69px;top:736px" width="29" height="22" viewBox="0 0 29 22"><path d="M0 7L7 2L28 6L17 20L11 19Z" fill="#d46a18"/><path d="M1 6L7 1L15 6L10 12Z" fill="#f5d040"/></svg>
<div class="a" style="left:102px;top:739px;font-weight:bold;letter-spacing:.28px">Interactive - Ocea...</div>
<div class="b" style="left:1172px;top:728px;width:192px;height:38px;border:1px solid;border-color:#808080 #fff #808080 #808080"></div>
<svg style="left:1179px;top:739px" width="16" height="16" viewBox="0 0 16 16"><rect width="8" height="8" fill="#e86a20"/><rect x="8" width="8" height="8" fill="#3a78c8"/><rect y="8" width="8" height="8" fill="#48a838"/><rect x="8" y="8" width="8" height="8" fill="#c82a20"/></svg>
<svg style="left:1203px;top:741px" width="16" height="12" viewBox="0 0 16 12"><rect y="1" width="13" height="8" fill="#30a030" stroke="#124"/><rect x="3" y="8" width="8" height="2" fill="#d8b020"/><rect x="14" y="0" width="2" height="10" fill="#345"/></svg>
<svg style="left:1227px;top:739px" width="16" height="16" viewBox="0 0 16 16"><rect x="4" y="3" width="11" height="9" fill="#ddd" stroke="#777"/><rect x="1" y="1" width="4" height="13" fill="#eee" stroke="#555"/><path d="M6 14H14" stroke="#777"/></svg>
<svg style="left:1251px;top:739px" width="17" height="17" viewBox="0 0 17 17"><path d="M1 5H4L8 1V14L4 10H1Z" fill="#ddd" stroke="#888"/><circle cx="12" cy="11" r="4.500" fill="#e83030"/><path d="M10 9L14 13M14 9L10 13" stroke="#fff" stroke-width="1.200"/></svg>
<div class="a" style="left:1295px;top:732px;letter-spacing:.14px">17:07</div>
<div class="a" style="left:1280px;top:748px;letter-spacing:.14px">20/07/2017</div>
<svg style="left:1345px;top:741px" width="16" height="14" viewBox="0 0 16 14"><rect width="16" height="12" fill="#1e5bb0" stroke="#456"/><rect y="9" width="16" height="3" fill="#223"/><rect x="2" y="10" width="2" height="2" fill="#8c8"/></svg>
</body></html>
